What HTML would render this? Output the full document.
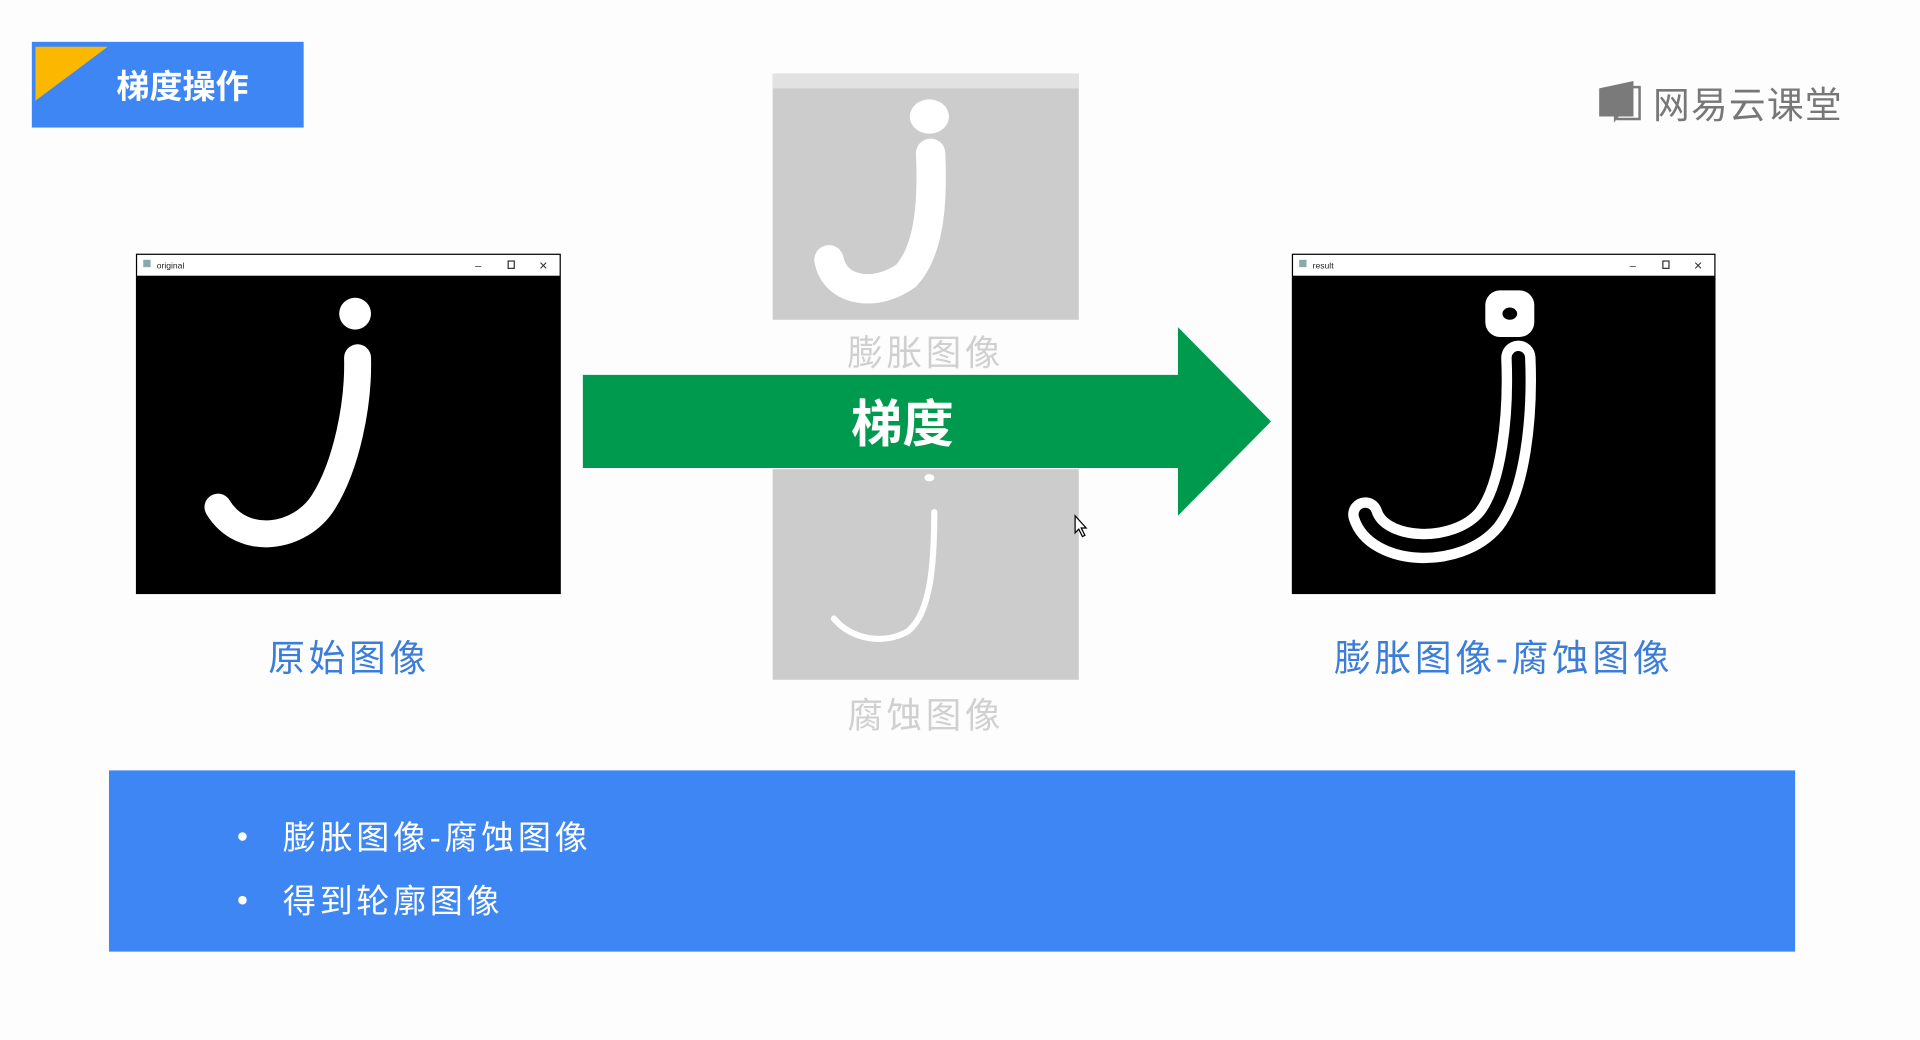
<!DOCTYPE html>
<html><head><meta charset="utf-8"><style>
html,body{margin:0;padding:0;background:#fdfdfd;width:1920px;height:1040px;overflow:hidden}
svg{display:block}
text{font-family:"Liberation Sans","Noto Sans CJK SC",sans-serif}
</style></head><body>
<svg width="1920" height="1040" viewBox="0 0 1568 849" xmlns="http://www.w3.org/2000/svg">
<rect width="1568" height="849" fill="#fdfdfd"/>
<!-- title -->
<rect x="26" y="34" width="222" height="70" fill="#3d86f4"/>
<polygon points="29,38 88,38 29,82" fill="#fcb800"/>
<text x="149" y="80" font-size="27" font-weight="bold" fill="#fff" text-anchor="middle">梯度操作</text>
<!-- logo -->
<path d="M1306,72 L1334,66 L1334,95 L1322,95 L1318,100 L1318,95 L1306,95 Z" fill="#7a7a7a"/>
<path d="M1334,71 L1339,71 L1339,97 L1320,97" fill="none" stroke="#7a7a7a" stroke-width="2"/>
<text x="1350" y="96" font-size="30" fill="#777" letter-spacing="1">网易云课堂</text>
<!-- original window -->
<rect x="111" y="207" width="347" height="278" fill="#000"/>
<rect x="112" y="208" width="345" height="17" fill="#fff"/>
<rect x="117" y="212" width="6" height="6" fill="#8aa"/>
<text x="128" y="219" font-size="7" fill="#222">original</text>
<text x="388" y="220" font-size="9" fill="#333">–</text>
<rect x="415" y="213" width="5" height="6" fill="none" stroke="#333" stroke-width="1"/>
<text x="440" y="220" font-size="9" fill="#333">✕</text>
<ellipse cx="290" cy="256" rx="13" ry="13" fill="#fff"/>
<path d="M292,292 C293,330 283,380 264,410 C245,440 198,447 178,414" fill="none" stroke="#fff" stroke-width="22" stroke-linecap="round"/>
<!-- dilated (faded) -->
<rect x="631" y="60" width="250" height="201" fill="#cccccc"/>
<rect x="631" y="60" width="250" height="12" fill="#e2e2e2"/>
<ellipse cx="759" cy="95" rx="16" ry="14" fill="#fff"/>
<path d="M760,125 C762,170 758,205 740,225 C715,243 682,238 677,212" fill="none" stroke="#fff" stroke-width="24" stroke-linecap="round"/>
<text x="756" y="298" font-size="29" fill="#d0d0d0" text-anchor="middle" letter-spacing="3">膨胀图像</text>
<!-- eroded -->
<rect x="631" y="383" width="250" height="172" fill="#cccccc"/>
<ellipse cx="759" cy="390" rx="4" ry="3" fill="#fff"/>
<path d="M763,418 C763,460 760,500 742,515 C722,527 695,522 681,505" fill="none" stroke="#fff" stroke-width="5" stroke-linecap="round"/>
<text x="756" y="594" font-size="29" fill="#d0d0d0" text-anchor="middle" letter-spacing="3">腐蚀图像</text>
<!-- arrow -->
<polygon points="476,306 962,306 962,267 1038,344 962,421 962,382 476,382" fill="#009a4e"/>
<text x="737" y="361" font-size="42" font-weight="bold" fill="#fff" text-anchor="middle">梯度</text>
<!-- cursor -->
<path d="M878,421 L878,435 L881,432 L884,438 L886,437 L883,431 L887,431 Z" fill="#fff" stroke="#000" stroke-width="1"/>
<!-- result window -->
<rect x="1055" y="207" width="346" height="278" fill="#000"/>
<rect x="1056" y="208" width="344" height="17" fill="#fff"/>
<rect x="1061" y="212" width="6" height="6" fill="#8aa"/>
<text x="1072" y="219" font-size="7" fill="#222">result</text>
<text x="1331" y="220" font-size="9" fill="#333">–</text>
<rect x="1358" y="213" width="5" height="6" fill="none" stroke="#333" stroke-width="1"/>
<text x="1383" y="220" font-size="9" fill="#333">✕</text>
<rect x="1213" y="237" width="40" height="38" rx="12" fill="#fff"/>
<ellipse cx="1233" cy="256" rx="6" ry="5" fill="#000"/>
<path d="M1240,292 C1242,340 1236,398 1216,424 C1190,455 1125,452 1115,420" fill="none" stroke="#fff" stroke-width="28" stroke-linecap="round"/>
<path d="M1240,292 C1242,340 1236,398 1216,424 C1190,455 1125,452 1115,420" fill="none" stroke="#000" stroke-width="11" stroke-linecap="round"/>
<!-- labels -->
<text x="285" y="548" font-size="30" fill="#3b7dd8" text-anchor="middle" letter-spacing="3">原始图像</text>
<text x="1228" y="548" font-size="30" fill="#3b7dd8" text-anchor="middle" letter-spacing="3">膨胀图像-腐蚀图像</text>
<!-- bottom box -->
<rect x="89" y="629" width="1377" height="148" fill="#3d86f4"/>
<circle cx="198" cy="683" r="3.5" fill="#fff"/>
<circle cx="198" cy="735" r="3.5" fill="#fff"/>
<text x="231" y="693" font-size="27" fill="#fff" letter-spacing="3">膨胀图像-腐蚀图像</text>
<text x="231" y="745" font-size="27" fill="#fff" letter-spacing="3">得到轮廓图像</text>
</svg>
</body></html>
